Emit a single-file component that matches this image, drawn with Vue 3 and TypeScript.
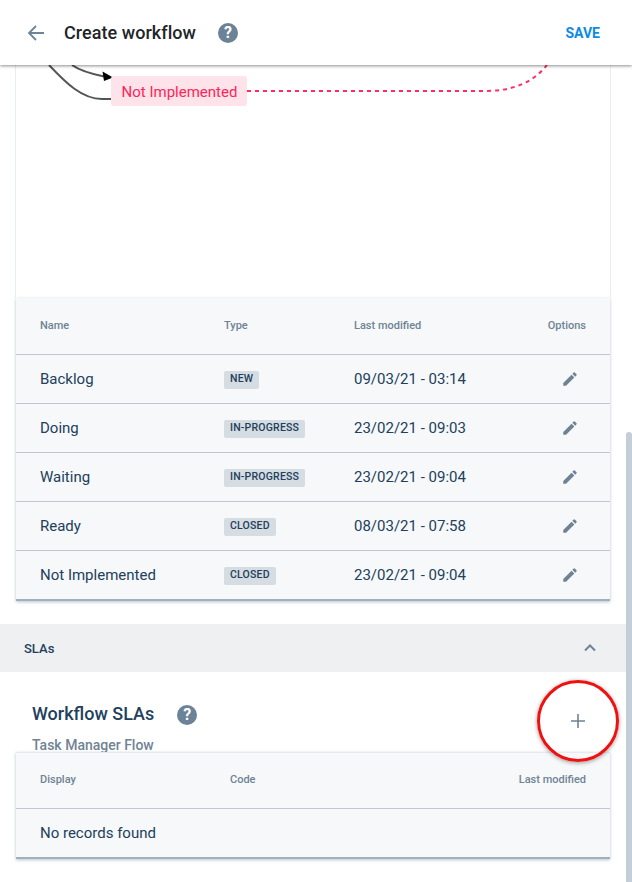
<script setup lang="ts">
interface Row { name: string; type: string; modified: string }
const rows: Row[] = [
  { name: 'Backlog', type: 'NEW', modified: '09/03/21 - 03:14' },
  { name: 'Doing', type: 'IN-PROGRESS', modified: '23/02/21 - 09:03' },
  { name: 'Waiting', type: 'IN-PROGRESS', modified: '23/02/21 - 09:04' },
  { name: 'Ready', type: 'CLOSED', modified: '08/03/21 - 07:58' },
  { name: 'Not Implemented', type: 'CLOSED', modified: '23/02/21 - 09:04' },
]
</script>

<template>
  <div class="page">
    <header class="topbar">
      <svg class="back" width="24" height="24" viewBox="0 0 24 24"><path d="M20 12H5.500M12 5l-7 7 7 7" fill="none" stroke="#6b8499" stroke-width="1.800"/></svg>
      <h1 class="title">Create workflow</h1>
      <span class="help">?</span>
      <span class="save">SAVE</span>
    </header>

    <main class="content">
      <section class="canvas">
        <svg class="edges" width="594" height="233" viewBox="16 65 594 233">
          <path d="M72 65C80 71 92 74 104 76.500" fill="none" stroke="#555" stroke-width="2"/>
          <path d="M113 77.500L102.500 71.500L104 81Z" fill="#000"/>
          <path d="M49 65C66 83 82 99 102 99H112" fill="none" stroke="#555" stroke-width="2"/>
          <path d="M247 91H485C510 91 532 84 547 65" fill="none" stroke="#ff2d5f" stroke-width="2" stroke-dasharray="4 4"/>
        </svg>
        <div class="node">Not Implemented</div>
      </section>

      <section class="table">
        <div class="row head">
          <span>Name</span><span>Type</span><span>Last modified</span><span class="end">Options</span>
        </div>
        <div v-for="r in rows" :key="r.name" class="row">
          <span>{{ r.name }}</span>
          <span><b class="chip">{{ r.type }}</b></span>
          <span>{{ r.modified }}</span>
          <span class="end edit">
            <svg width="18" height="18" viewBox="0 0 24 24"><path fill="#6f8394" d="M3 17.250V21h3.750L17.810 9.940l-3.750-3.750L3 17.250zM20.710 7.040a1 1 0 0 0 0-1.410l-2.340-2.340a1 1 0 0 0-1.410 0l-1.830 1.830 3.750 3.750 1.830-1.830z"/></svg>
          </span>
        </div>
      </section>

      <div class="accordion">
        <span>SLAs</span>
        <svg width="24" height="24" viewBox="0 0 24 24"><path d="M7 14.500l5-5 5 5" fill="none" stroke="#6f8394" stroke-width="2"/></svg>
      </div>

      <section class="sla">
        <div class="sla-head">
          <div class="sla-title">
            <h2>Workflow SLAs</h2>
            <span class="help">?</span>
          </div>
          <div class="add">
            <svg width="24" height="24" viewBox="0 0 24 24"><path d="M12 5v14M5 12h14" stroke="#6f8394" stroke-width="1.600" fill="none"/></svg>
          </div>
        </div>
        <p class="subtitle">Task Manager Flow</p>
        <div class="table sla-table">
          <div class="row head sla-row">
            <span>Display</span><span>Code</span><span class="end">Last modified</span>
          </div>
          <div class="row sla-row"><span>No records found</span></div>
        </div>
      </section>
    </main>

    <div class="scrollbar"></div>
  </div>
</template>

<style scoped>
.page {
  position: relative;
  width: 632px;
  height: 882px;
  overflow: hidden;
  background: #fff;
  font-family: Roboto, "Liberation Sans", sans-serif;
  color: #22405c;
}
.topbar {
  position: relative;
  z-index: 2;
  display: flex;
  align-items: center;
  height: 65px;
  padding: 0 32px 0 24px;
  box-sizing: border-box;
  background: #fff;
  box-shadow: 0 1px 3px rgba(0, 0, 0, 0.45);
}
.back { margin-right: 16px; }
.title {
  margin: 0 22px 0 0;
  font-size: 18px;
  font-weight: 500;
  letter-spacing: 0.05px;
  color: #212529;
}
.help {
  display: flex;
  align-items: center;
  justify-content: center;
  width: 20px;
  height: 20px;
  border-radius: 50%;
  background: #6b8297;
  color: #fff;
  font-size: 16px;
  font-weight: 700;
}
.save {
  margin-left: auto;
  color: #0d8ae6;
  font-size: 14px;
  font-weight: 700;
}
.content { width: 626px; }
.canvas {
  position: relative;
  height: 233px;
  margin: 0 15px;
  border: solid #e8edf0;
  border-width: 0 1px;
}
.edges { position: absolute; left: 0; top: 0; }
.node {
  position: absolute;
  left: 95px;
  top: 11px;
  width: 135px;
  height: 30px;
  padding-left: 1px;
  line-height: 32px;
  text-align: center;
  border-radius: 3px;
  background: #ffe3ea;
  color: #ff2457;
  font-size: 15px;
}
.table {
  margin: 0 16px;
  background: #f6f8fa;
  box-shadow: 0 1px 3px rgba(60, 80, 100, 0.35);
  border-bottom: 2px solid #9fb0bf;
}
.row {
  display: grid;
  grid-template-columns: 184px 130px 1fr auto;
  align-items: center;
  height: 49px;
  padding: 0 24px;
  box-sizing: border-box;
  border-top: 1px solid #bcc7d1;
  font-size: 15px;
  color: #22405c;
}
.head {
  height: 56px;
  padding-bottom: 2px;
  border-top: 0;
  border-bottom: 0;
  font-size: 11px;
  font-weight: 500;
  color: #6f8394;
}
.end { justify-self: end; }
.edit { margin-right: 7px; display: flex; }
.chip {
  display: inline-block;
  padding: 0 6px;
  height: 18px;
  line-height: 16px;
  border-radius: 2px;
  background: #d5dce2;
  color: #22405c;
  font-size: 10.500px;
  font-weight: 500;
  letter-spacing: 0.2px;
  vertical-align: middle;
}
.accordion {
  display: flex;
  align-items: center;
  justify-content: space-between;
  height: 48px;
  margin-top: 23px;
  padding: 0 24px;
  background: #eff0f2;
  font-size: 13px;
  font-weight: 500;
}
.sla { height: 210px; overflow: hidden; }
.sla-head {
  display: flex;
  align-items: center;
  justify-content: space-between;
  height: 49px;
  padding: 18px 36px 0 32px;
}
.sla-title { display: flex; align-items: center; gap: 23px; }
.sla-title h2 {
  margin: -2px 0 0;
  font-size: 18px;
  font-weight: 500;
  color: #22405c;
}
.add { display: flex; margin-top: 13px; }
.subtitle {
  height: 13px;
  margin: 0;
  padding-left: 32px;
  overflow: hidden;
  line-height: 13px;
  font-size: 14px;
  font-weight: 500;
  color: #6f8394;
}
.sla-table { border-top: 1px solid #e6eaee; }
.sla-table .head { height: 55px; }
.sla-row { grid-template-columns: 190px 1fr auto; }
.add::after {
  content: "";
  position: absolute;
  left: 537px;
  top: 680px;
  width: 76px;
  height: 76px;
  border: 3px solid #f01010;
  border-radius: 50%;
  box-shadow: 0 1px 4px rgba(0, 0, 0, 0.4);
}
.scrollbar {
  position: absolute;
  right: 0;
  top: 432px;
  bottom: 0;
  width: 6px;
  border-radius: 3px 3px 0 0;
  background: #c3ced8;
}
</style>

<style>
html, body { margin: 0; overflow: hidden; }
</style>
